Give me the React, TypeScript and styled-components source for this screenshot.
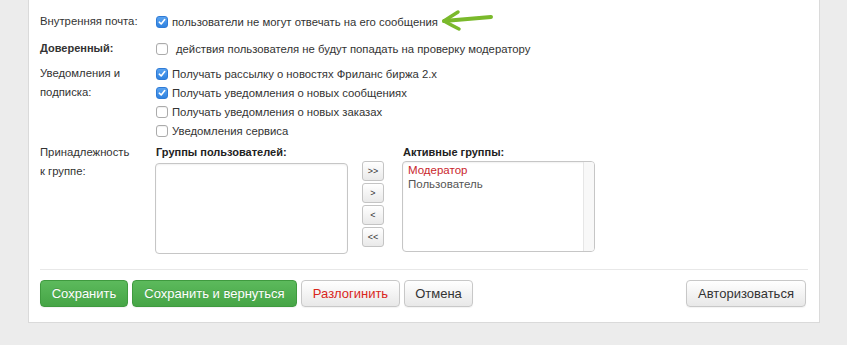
import styled, { createGlobalStyle } from "styled-components";

const GlobalStyle = createGlobalStyle`
  html, body {
    margin: 0;
    padding: 0;
    background: #ececec;
    font-family: "Liberation Sans", Arial, sans-serif;
    color: #333;
  }
`;

const Page = styled.div`
  width: 847px;
  height: 345px;
  overflow: hidden;
  background: #ececec;
`;

const Panel = styled.div`
  position: relative;
  margin-left: 28px;
  width: 792px;
  box-sizing: border-box;
  background: #fff;
  border: 1px solid #dadada;
  border-top: none;
  padding: 12px 11px 15px 11px;
`;

const Field = styled.div<{ $mt?: number }>`
  display: grid;
  grid-template-columns: 115px 1fr;
  margin-top: ${(p) => p.$mt ?? 0}px;
`;

const Label = styled.div<{ $bold?: boolean }>`
  font-size: ${(p) => (p.$bold ? "11px" : "11.3px")};
  line-height: 19px;
  font-weight: ${(p) => (p.$bold ? "bold" : "normal")};
  color: #333;
`;

const Lines = styled.div`
  display: flex;
  flex-direction: column;
`;

const CheckLine = styled.label<{ $gap?: number }>`
  display: flex;
  align-items: center;
  gap: ${(p) => p.$gap ?? 4}px;
  height: 19px;
  font-size: 11.3px;
  color: #333;
  padding-left: 1px;
`;

const Box = styled.span<{ $on: boolean }>`
  width: 12px;
  height: 12px;
  box-sizing: border-box;
  border-radius: 3px;
  display: inline-flex;
  align-items: center;
  justify-content: center;
  background: ${(p) => (p.$on ? "linear-gradient(#5aa3f0, #2f82e0)" : "#fff")};
  border: 1px solid ${(p) => (p.$on ? "#2f7bd6" : "#ababab")};
  box-shadow: ${(p) => (p.$on ? "none" : "inset 0 1px 1px rgba(0,0,0,0.06)")};
`;

const Check = ({ on }: { on: boolean }) => (
  <Box $on={on}>
    {on && (
      <svg width="8" height="8" viewBox="0 0 8 8">
        <path d="M1.3 4.2 L3.2 6 L6.7 1.6" fill="none" stroke="#fff" strokeWidth="1.6" strokeLinecap="round" strokeLinejoin="round" />
      </svg>
    )}
  </Box>
);

const Arrow = styled.svg`
  position: absolute;
  left: 410px;
  top: 6px;
`;

const Groups = styled.div`
  display: flex;
  align-items: flex-start;
`;

const GroupCol = styled.div`
  display: flex;
  flex-direction: column;
`;

const GroupTitle = styled.div`
  font-size: 11px;
  font-weight: bold;
  line-height: 19px;
  color: #222;
  padding-left: 1px;
`;

const ListBox = styled.div<{ $mt?: number }>`
  position: relative;
  width: 193px;
  height: 91px;
  margin-top: ${(p) => p.$mt ?? 0}px;
  box-sizing: border-box;
  border: 1px solid #c6c6c6;
  border-radius: 4px;
  background: #fff;
  box-shadow: inset 0 1px 2px rgba(0, 0, 0, 0.06);
  padding: 1px 5px;
  overflow: hidden;
`;

const Scrollbar = styled.div`
  position: absolute;
  top: 0;
  right: 0;
  bottom: 0;
  width: 10px;
  background: #f8f8f8;
  border-left: 1px solid #e6e6e6;
`;

const Option = styled.div<{ $accent?: boolean }>`
  font-size: 11.5px;
  line-height: 14px;
  color: ${(p) => (p.$accent ? "#c9252c" : "#555")};
`;

const MoveCol = styled.div`
  display: flex;
  flex-direction: column;
  gap: 2px;
  margin: 18px 18px 0 14px;
`;

const MoveBtn = styled.button`
  width: 22px;
  height: 20px;
  padding: 0;
  border: 1px solid #c4c4c4;
  border-radius: 3px;
  background: linear-gradient(#ffffff, #e9e9e9);
  font-family: "Liberation Sans", Arial, sans-serif;
  font-size: 9px;
  color: #333;
  line-height: 18px;
`;

const Divider = styled.hr`
  border: none;
  border-top: 1px solid #e8e8e8;
  margin: 15px 0 10px 0;
`;

const Actions = styled.div`
  display: flex;
  align-items: center;
  gap: 4px;
  padding-right: 2px;
`;

const Spacer = styled.div`
  flex: 1;
`;

const Button = styled.button<{ $variant?: "green" | "danger" | "default"; $w: number }>`
  width: ${(p) => p.$w}px;
  height: 27px;
  box-sizing: border-box;
  border-radius: 4px;
  font-family: "Liberation Sans", Arial, sans-serif;
  font-size: 13px;
  padding: 0;
  border: 1px solid
    ${(p) => (p.$variant === "green" ? "#3f9a3f" : "#c8c8c8")};
  background: ${(p) =>
    p.$variant === "green"
      ? "linear-gradient(#5cba5c, #46a546)"
      : "linear-gradient(#ffffff, #e8e8e8)"};
  color: ${(p) =>
    p.$variant === "green" ? "#fff" : p.$variant === "danger" ? "#d9261c" : "#333"};
  text-shadow: ${(p) => (p.$variant === "green" ? "0 -1px 0 rgba(0,0,0,0.15)" : "none")};
  box-shadow: 0 1px 1px rgba(0, 0, 0, 0.05);
`;

export default function App() {
  return (
    <Page>
      <GlobalStyle />
      <Panel>
        <Arrow width="60" height="28" viewBox="0 0 60 28">
          <path d="M5 15 Q28 13 52 11" fill="none" stroke="#7ab92b" strokeWidth="4" strokeLinecap="round" />
          <path d="M19 6 Q11 11 5 15 Q12 19 20 23" fill="none" stroke="#7ab92b" strokeWidth="3.5" strokeLinecap="round" strokeLinejoin="round" />
        </Arrow>

        <Field>
          <Label>Внутренняя почта:</Label>
          <CheckLine>
            <Check on />
            пользователи не могут отвечать на его сообщения
          </CheckLine>
        </Field>

        <Field $mt={8}>
          <Label $bold>Доверенный:</Label>
          <CheckLine $gap={8}>
            <Check on={false} />
            действия пользователя не будут попадать на проверку модератору
          </CheckLine>
        </Field>

        <Field $mt={6}>
          <Label>
            Уведомления и
            <br />
            подписка:
          </Label>
          <Lines>
            <CheckLine>
              <Check on />
              Получать рассылку о новостях Фриланс биржа 2.x
            </CheckLine>
            <CheckLine>
              <Check on />
              Получать уведомления о новых сообщениях
            </CheckLine>
            <CheckLine>
              <Check on={false} />
              Получать уведомления о новых заказах
            </CheckLine>
            <CheckLine>
              <Check on={false} />
              Уведомления сервиса
            </CheckLine>
          </Lines>
        </Field>

        <Field $mt={3}>
          <Label>
            Принадлежность
            <br />к группе:
          </Label>
          <Groups>
            <GroupCol>
              <GroupTitle>Группы пользователей:</GroupTitle>
              <ListBox $mt={1} />
            </GroupCol>
            <MoveCol>
              <MoveBtn>&gt;&gt;</MoveBtn>
              <MoveBtn>&gt;</MoveBtn>
              <MoveBtn>&lt;</MoveBtn>
              <MoveBtn>&lt;&lt;</MoveBtn>
            </MoveCol>
            <GroupCol>
              <GroupTitle>Активные группы:</GroupTitle>
              <ListBox $mt={-1}>
                <Option $accent>Модератор</Option>
                <Option>Пользователь</Option>
                <Scrollbar />
              </ListBox>
            </GroupCol>
          </Groups>
        </Field>

        <Divider />

        <Actions>
          <Button $variant="green" $w={88}>Сохранить</Button>
          <Button $variant="green" $w={165}>Сохранить и вернуться</Button>
          <Button $variant="danger" $w={99}>Разлогинить</Button>
          <Button $w={69}>Отмена</Button>
          <Spacer />
          <Button $w={120}>Авторизоваться</Button>
        </Actions>
      </Panel>
    </Page>
  );
}
